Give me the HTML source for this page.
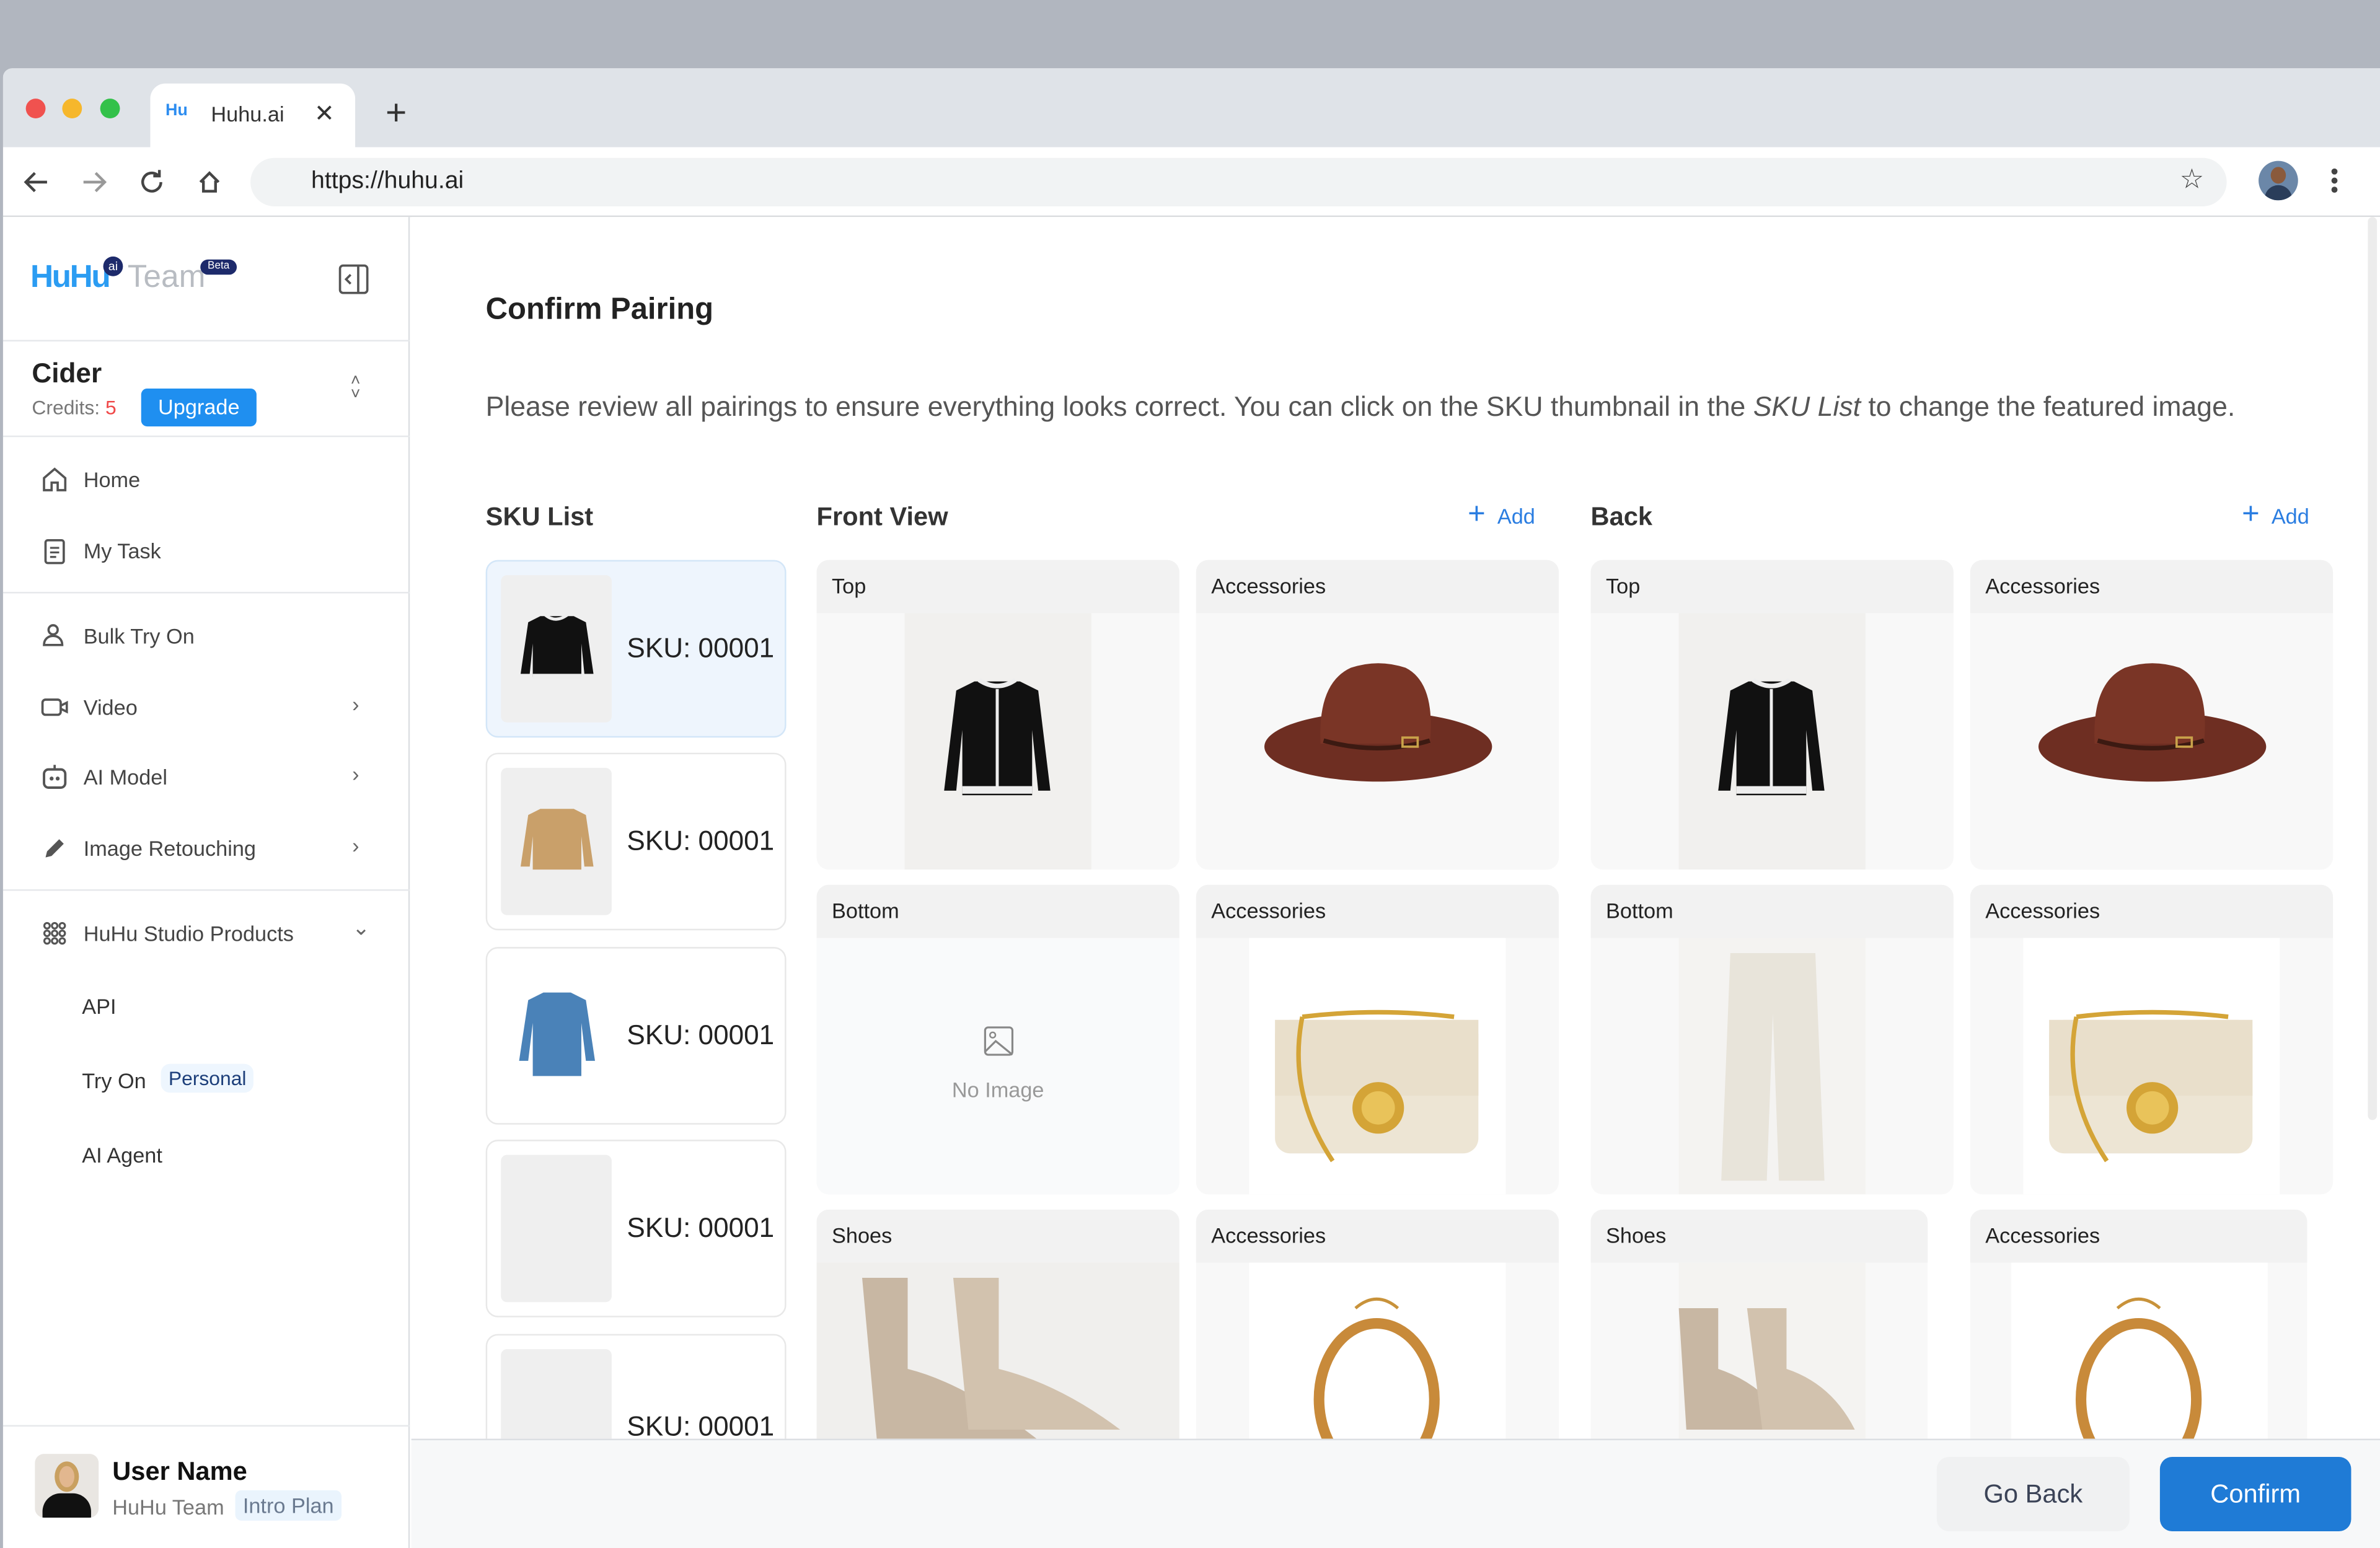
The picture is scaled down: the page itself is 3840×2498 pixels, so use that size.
<!DOCTYPE html>
<html><head><meta charset="utf-8"><style>
*{box-sizing:border-box;margin:0;padding:0}
html,body{width:3840px;height:2496px;overflow:hidden;background:#b1b6bf}
#s{position:absolute;left:0;top:0;width:1568px;height:1020px;transform:scale(2.44898);transform-origin:0 0;font-family:"Liberation Sans",sans-serif;color:#222}
.abs{position:absolute}
.win{left:2px;top:45px;width:1566px;height:975px;background:#fff;border-radius:6px 0 0 0;overflow:hidden}
.tabbar{left:0;top:0;width:1566px;height:52px;background:#dfe3e8}
.dot{width:13px;height:13px;border-radius:50%;top:20px}
.tab{left:97px;top:10px;width:135px;height:42px;background:#fff;border-radius:10px 10px 0 0}
.tool{left:0;top:52px;width:1566px;height:46px;background:#fff;border-bottom:1px solid #d9dbde}
.url{left:163px;top:7px;width:1302px;height:32px;background:#f1f3f4;border-radius:16px;font-size:16px;line-height:32px;padding-left:40px;color:#222}
.side{left:0;top:98px;width:268px;height:877px;border-right:1px solid #dcdfe3;background:#fff}
.hr{position:absolute;left:0;width:268px;height:1px;background:#e6e8eb}
.nav{position:absolute;left:24px;font-size:14px;color:#444;display:flex;align-items:center;gap:9px}
.nav svg{width:20px;height:20px}
.chev{position:absolute;left:230px;font-size:14px;color:#666}
.main{left:269px;top:98px;width:1297px;height:877px;background:#fff}
.h{font-size:17px;font-weight:bold;color:#333;position:absolute}
.add{position:absolute;color:#2a7de1;font-size:14px}
.sku{position:absolute;left:49px;width:198px;height:117px;border:1px solid #e8e8e8;border-radius:8px;background:#fff}
.sku .th{position:absolute;left:9px;top:9px;width:73px;height:97px;background:#efefef;border-radius:4px;overflow:hidden}
.sku .t{position:absolute;left:92px;top:47px;font-size:18px;color:#222}
.card{position:absolute;width:239px;height:204px;background:#f8f8f8;border-radius:8px;overflow:hidden}
.card .lb{height:35px;background:#f2f2f2;font-size:14px;color:#222;padding:9px 10px}
.card .im{position:absolute;top:35px;bottom:0;background:#fff}
.bot{left:269px;top:903px;width:1297px;height:72px;background:#f7f8f9;border-top:1px solid #dcdfe3}
</style></head><body><div id="s">
<div class="abs win">
 <div class="abs tabbar">
  <div class="abs dot" style="left:15px;background:#f0524f"></div>
  <div class="abs dot" style="left:39px;background:#f6b72c"></div>
  <div class="abs dot" style="left:64px;background:#33c14a"></div>
  <div class="abs tab"><span class="abs" style="left:10px;top:12px;font-size:11px;font-weight:bold;color:#2d8df0">Hu</span><span class="abs" style="left:40px;top:12px;font-size:14px;color:#333">Huhu.ai</span><span class="abs" style="left:108px;top:10px;font-size:16px;color:#333">✕</span></div>
  <div class="abs" style="left:252px;top:18px;font-size:24px;color:#333;line-height:24px">+</div>
 </div>
 <div class="abs tool">
  <svg class="abs" style="left:12px;top:13px" width="20" height="20" viewBox="0 0 20 20"><path d="M17 10H3M9 4l-6 6 6 6" stroke="#444" stroke-width="1.8" fill="none"/></svg>
  <svg class="abs" style="left:50px;top:13px" width="20" height="20" viewBox="0 0 20 20"><path d="M3 10h14M11 4l6 6-6 6" stroke="#999" stroke-width="1.8" fill="none"/></svg>
  <svg class="abs" style="left:88px;top:13px" width="20" height="20" viewBox="0 0 20 20"><path d="M16 10a6 6 0 1 1-2-4.5M15 2v4h-4" stroke="#444" stroke-width="1.8" fill="none"/></svg>
  <svg class="abs" style="left:126px;top:13px" width="20" height="20" viewBox="0 0 20 20"><path d="M4 10l6-6 6 6M6 9v7h8V9" stroke="#444" stroke-width="1.8" fill="none"/></svg>
  <div class="abs url">https://huhu.ai</div>
  <div class="abs" style="left:1434px;top:11px;font-size:18px;color:#444">☆</div>
  <div class="abs" style="left:1486px;top:9px;width:26px;height:26px;border-radius:50%;background:#6b87a8;overflow:hidden"><div class="abs" style="left:8px;top:4px;width:10px;height:11px;border-radius:50%;background:#8a5a3c"></div><div class="abs" style="left:4px;top:16px;width:18px;height:10px;border-radius:9px 9px 0 0;background:#2a3d5a"></div></div>
  <div class="abs" style="left:1534px;top:14px;width:4px;height:4px;border-radius:2px;background:#444;box-shadow:0 6px 0 #444,0 12px 0 #444"></div>
 </div>
 <div class="abs side">
  <div class="abs" style="left:18px;top:28px;font-size:21px;font-weight:bold;color:#2b9cf2;letter-spacing:-1px">HuHu</div>
  <div class="abs" style="left:66px;top:26px;width:13px;height:13px;border-radius:50%;background:#1d2a6b;color:#fff;font-size:8px;text-align:center;line-height:13px">ai</div>
  <div class="abs" style="left:82px;top:28px;font-size:21px;color:#b8bcc2">Team</div>
  <div class="abs" style="left:130px;top:28px;width:24px;height:10px;border-radius:5px;background:#1d2a6b;color:#fff;font-size:7px;text-align:center;line-height:10px">Beta</div>
  <svg class="abs" style="left:220px;top:30px" width="22" height="22" viewBox="0 0 22 22"><rect x="2" y="2" width="18" height="18" rx="2" stroke="#555" stroke-width="1.5" fill="none"/><path d="M14 2v18M9 8l-3 3 3 3" stroke="#555" stroke-width="1.5" fill="none"/></svg>
  <div class="hr" style="top:81px"></div>
  <div class="abs" style="left:19px;top:93px;font-size:18px;font-weight:bold;color:#222">Cider</div>
  <div class="abs" style="left:19px;top:118px;font-size:13px;color:#777">Credits: <span style="color:#f04848">5</span></div>
  <div class="abs" style="left:91px;top:113px;width:76px;height:25px;background:#1f8ff0;border-radius:4px;color:#fff;font-size:14px;text-align:center;line-height:25px">Upgrade</div>
  <div class="abs" style="left:229px;top:104px;font-size:11px;color:#666;line-height:9px">˄<br>˅</div>
  <div class="hr" style="top:144px"></div>
  <div class="nav" style="top:163px"><svg viewBox="0 0 20 20"><path d="M3 9l7-6 7 6v8h-5v-5H8v5H3z" stroke="#555" stroke-width="1.5" fill="none"/></svg>Home</div>
  <div class="nav" style="top:210px"><svg viewBox="0 0 20 20"><rect x="4" y="3" width="12" height="15" rx="1.5" stroke="#555" stroke-width="1.5" fill="none"/><path d="M7 8h6M7 11h6M7 14h4" stroke="#555" stroke-width="1.3"/></svg>My Task</div>
  <div class="hr" style="top:247px"></div>
  <div class="nav" style="top:266px"><svg viewBox="0 0 20 20"><circle cx="9" cy="6" r="3" stroke="#555" stroke-width="1.5" fill="none"/><path d="M3 16c0-4 3-6 6-6s6 2 6 6z" stroke="#555" stroke-width="1.5" fill="none"/></svg>Bulk Try On</div>
  <div class="nav" style="top:313px"><svg viewBox="0 0 20 20"><rect x="2" y="5" width="12" height="10" rx="2" stroke="#555" stroke-width="1.5" fill="none"/><path d="M14 9l4-2v6l-4-2" stroke="#555" stroke-width="1.5" fill="none"/></svg>Video</div><div class="chev" style="top:313px">›</div>
  <div class="nav" style="top:359px"><svg viewBox="0 0 20 20"><rect x="3" y="5" width="14" height="12" rx="3" stroke="#555" stroke-width="1.6" fill="none"/><circle cx="8" cy="11" r="1.3" fill="#555"/><circle cx="12" cy="11" r="1.3" fill="#555"/><path d="M10 5V2" stroke="#555" stroke-width="1.5"/></svg>AI Model</div><div class="chev" style="top:359px">›</div>
  <div class="nav" style="top:406px"><svg viewBox="0 0 20 20"><path d="M4 16l1-4 8-8 3 3-8 8z" fill="#555"/></svg>Image Retouching</div><div class="chev" style="top:406px">›</div>
  <div class="hr" style="top:443px"></div>
  <div class="nav" style="top:462px"><svg viewBox="0 0 20 20"><g fill="none" stroke="#555" stroke-width="1.3"><circle cx="5" cy="5" r="1.8"/><circle cx="10" cy="5" r="1.8"/><circle cx="15" cy="5" r="1.8"/><circle cx="5" cy="10" r="1.8"/><circle cx="10" cy="10" r="1.8"/><circle cx="15" cy="10" r="1.8"/><circle cx="5" cy="15" r="1.8"/><circle cx="10" cy="15" r="1.8"/><circle cx="15" cy="15" r="1.8"/></g></svg>HuHu Studio Products</div><div class="chev" style="top:460px">⌄</div>
  <div class="abs" style="left:52px;top:512px;font-size:14px;color:#333">API</div>
  <div class="abs" style="left:52px;top:561px;font-size:14px;color:#333">Try On</div>
  <div class="abs" style="left:104px;top:558px;padding:2px 5px;background:#eef6fe;border-radius:6px;font-size:13px;color:#1d3f7a">Personal</div>
  <div class="abs" style="left:52px;top:610px;font-size:14px;color:#333">AI Agent</div>
  <div class="hr" style="top:796px"></div>
  <div class="abs" style="left:21px;top:815px;width:42px;height:42px;border-radius:6px;background:#e9e6e2;overflow:hidden"><div class="abs" style="left:13px;top:5px;width:16px;height:20px;border-radius:50%;background:#e2b78f;border:3px solid #c9a060"></div><div class="abs" style="left:5px;top:26px;width:32px;height:20px;border-radius:12px 12px 0 0;background:#111"></div></div>
  <div class="abs" style="left:72px;top:817px;font-size:17px;font-weight:bold;color:#111">User Name</div>
  <div class="abs" style="left:72px;top:842px;font-size:14px;color:#777">HuHu Team</div>
  <div class="abs" style="left:153px;top:839px;padding:2px 5px;background:#eaf4fd;border-radius:4px;font-size:14px;color:#6a7a90">Intro Plan</div>
 </div>
 <div class="abs main">
  <div class="abs" style="left:49px;top:50px;font-size:20px;font-weight:bold;color:#222">Confirm Pairing</div>
  <div class="abs" style="left:49px;top:115px;font-size:18.2px;color:#555;white-space:nowrap">Please review all pairings to ensure everything looks correct. You can click on the SKU thumbnail in the <i>SKU List</i> to change the featured image.</div>
  <div class="h" style="left:49px;top:188px">SKU List</div>
  <div class="h" style="left:267px;top:188px">Front View</div>
  <div class="add" style="left:696px;top:189px"><span style="font-size:20px;line-height:14px">+</span> &nbsp;Add</div>
  <div class="h" style="left:777px;top:188px">Back</div>
  <div class="add" style="left:1206px;top:189px"><span style="font-size:20px;line-height:14px">+</span> &nbsp;Add</div>

  <div class="sku" style="top:226px;background:#eef5fd;border-color:#d3e6f8"><div class="th"><svg width="73" height="97" viewBox="0 0 73 97"><path d="M26 27l-8 4-5 34h6l2-20v22h32V45l2 20h6l-5-34-8-4z" fill="#111"/><path d="M29 26q7 6 15 0" stroke="#eee" stroke-width="2" fill="none"/><rect x="21" y="65" width="32" height="3" fill="#eee"/></svg></div><div class="t">SKU: 00001</div></div>
  <div class="sku" style="top:353px"><div class="th"><svg width="73" height="97" viewBox="0 0 73 97"><path d="M26 27l-8 4-5 34h6l2-20v22h32V45l2 20h6l-5-34-8-4z" fill="#c9a06a"/></svg></div><div class="t">SKU: 00001</div></div>
  <div class="sku" style="top:481px"><div class="th" style="background:#fff"><svg width="73" height="97" viewBox="0 0 73 97"><path d="M28 20l-10 5-6 40h6l3-25v35h32V40l3 25h6l-6-40-10-5z" fill="#4a82b8"/></svg></div><div class="t">SKU: 00001</div></div>
  <div class="sku" style="top:608px"><div class="th"></div><div class="t">SKU: 00001</div></div>
  <div class="sku" style="top:736px;height:100px"><div class="th"></div><div class="t" style="top:50px">SKU: 00001</div></div>

  <div class="card" style="left:267px;top:226px"><div class="lb">Top</div><div class="im" style="left:58px;width:123px;background:#f1f0ee"><svg width="123" height="169" viewBox="0 0 123 169"><path d="M46 45l-12 6-8 66h8l4-40v43h46V77l4 40h8l-8-66-12-6z" fill="#111"/><path d="M49 44q12 8 24 0" stroke="#eee" stroke-width="3" fill="none"/><path d="M61 50v68" stroke="#eee" stroke-width="2"/><rect x="38" y="114" width="46" height="5" fill="#eee"/></svg></div></div>
  <div class="card" style="left:517px;top:226px"><div class="lb">Accessories</div><div class="im" style="left:0;width:239px;background:#f8f8f8"><svg width="239" height="169" viewBox="0 0 239 169"><ellipse cx="120" cy="88" rx="75" ry="23" fill="#6e2e22"/><path d="M82 86q-2-40 20-50q18-6 36 0q20 10 16 50z" fill="#7a3526"/><path d="M84 84q36 10 70 0" stroke="#3c1a12" stroke-width="3" fill="none"/><rect x="136" y="82" width="10" height="6" fill="none" stroke="#c9a24a" stroke-width="1.5"/></svg></div></div>
  <div class="card" style="left:777px;top:226px"><div class="lb">Top</div><div class="im" style="left:58px;width:123px;background:#f1f0ee"><svg width="123" height="169" viewBox="0 0 123 169"><path d="M46 45l-12 6-8 66h8l4-40v43h46V77l4 40h8l-8-66-12-6z" fill="#111"/><path d="M49 44q12 8 24 0" stroke="#eee" stroke-width="3" fill="none"/><path d="M61 50v68" stroke="#eee" stroke-width="2"/><rect x="38" y="114" width="46" height="5" fill="#eee"/></svg></div></div>
  <div class="card" style="left:1027px;top:226px"><div class="lb">Accessories</div><div class="im" style="left:0;width:239px;background:#f8f8f8"><svg width="239" height="169" viewBox="0 0 239 169"><ellipse cx="120" cy="88" rx="75" ry="23" fill="#6e2e22"/><path d="M82 86q-2-40 20-50q18-6 36 0q20 10 16 50z" fill="#7a3526"/><path d="M84 84q36 10 70 0" stroke="#3c1a12" stroke-width="3" fill="none"/><rect x="136" y="82" width="10" height="6" fill="none" stroke="#c9a24a" stroke-width="1.5"/></svg></div></div>

  <div class="card" style="left:267px;top:440px"><div class="lb">Bottom</div><div class="im" style="left:0;width:239px;background:#f9fafb"><svg class="abs" style="left:110px;top:58px" width="20" height="20" viewBox="0 0 20 20"><rect x="1" y="1" width="18" height="18" rx="2" stroke="#888" stroke-width="1.3" fill="none"/><circle cx="6" cy="6" r="1.8" stroke="#888" fill="none"/><path d="M1 17l7-7 11 9" stroke="#888" stroke-width="1.3" fill="none"/></svg><div class="abs" style="left:0;width:239px;top:92px;text-align:center;font-size:14px;color:#999">No Image</div></div></div>
  <div class="card" style="left:517px;top:440px"><div class="lb">Accessories</div><div class="im" style="left:35px;width:169px"><svg width="169" height="169" viewBox="0 0 169 169"><path d="M35 52q50-6 100 0" stroke="#d4a437" stroke-width="3" fill="none"/><rect x="17" y="54" width="134" height="88" rx="10" fill="#ede5d4"/><path d="M17 54h134v50H17z" fill="#e9dfcb"/><circle cx="85" cy="112" r="17" fill="#d4a437"/><circle cx="85" cy="112" r="11" fill="#e9c35a"/><path d="M35 52q-10 50 20 95" stroke="#d4a437" stroke-width="3" fill="none"/></svg></div></div>
  <div class="card" style="left:777px;top:440px"><div class="lb">Bottom</div><div class="im" style="left:58px;width:123px;background:#f4f3f1"><svg width="123" height="169" viewBox="0 0 123 169"><path d="M34 10h56l6 150H66L62 50l-4 110H28z" fill="#e8e4da"/></svg></div></div>
  <div class="card" style="left:1027px;top:440px"><div class="lb">Accessories</div><div class="im" style="left:35px;width:169px"><svg width="169" height="169" viewBox="0 0 169 169"><path d="M35 52q50-6 100 0" stroke="#d4a437" stroke-width="3" fill="none"/><rect x="17" y="54" width="134" height="88" rx="10" fill="#ede5d4"/><path d="M17 54h134v50H17z" fill="#e9dfcb"/><circle cx="85" cy="112" r="17" fill="#d4a437"/><circle cx="85" cy="112" r="11" fill="#e9c35a"/><path d="M35 52q-10 50 20 95" stroke="#d4a437" stroke-width="3" fill="none"/></svg></div></div>

  <div class="card" style="left:267px;top:654px"><div class="lb">Shoes</div><div class="im" style="left:0;width:239px;background:#f0efed"><svg width="239" height="169" viewBox="0 0 239 169"><path d="M30 10h30v60q40 10 90 50H40z" fill="#c8b7a3"/><path d="M90 10h30v60q40 10 80 40H100z" fill="#d2c2ae"/></svg></div></div>
  <div class="card" style="left:517px;top:654px"><div class="lb">Accessories</div><div class="im" style="left:35px;width:169px"><svg width="169" height="169" viewBox="0 0 169 169"><ellipse cx="84" cy="90" rx="38" ry="50" stroke="#c88a3a" stroke-width="7" fill="none"/><path d="M70 30q14-12 28 0" stroke="#c8923a" stroke-width="2" fill="none"/></svg></div></div>
  <div class="card" style="left:777px;top:654px;width:222px"><div class="lb">Shoes</div><div class="im" style="left:58px;width:123px;background:#f4f3f1"><svg width="123" height="169" viewBox="0 0 123 169"><path d="M0 30h26v40q30 10 50 40H5z" fill="#c8b7a3"/><path d="M45 30h26v40q30 10 45 40H55z" fill="#d2c2ae"/></svg></div></div>
  <div class="card" style="left:1027px;top:654px;width:222px"><div class="lb">Accessories</div><div class="im" style="left:27px;width:169px"><svg width="169" height="169" viewBox="0 0 169 169"><ellipse cx="84" cy="90" rx="38" ry="50" stroke="#c88a3a" stroke-width="7" fill="none"/><path d="M70 30q14-12 28 0" stroke="#c8923a" stroke-width="2" fill="none"/></svg></div></div>
  <div class="abs" style="left:1289px;top:0;width:6px;height:595px;background:#ececec;border-radius:3px"></div>
 </div>
 <div class="abs bot">
  <div class="abs" style="left:1005px;top:11px;width:127px;height:49px;background:#f0f1f2;border-radius:8px;text-align:center;line-height:49px;font-size:17px;color:#3b4357">Go Back</div>
  <div class="abs" style="left:1152px;top:11px;width:126px;height:49px;background:#1f7bd6;border-radius:8px;text-align:center;line-height:49px;font-size:17px;color:#fff">Confirm</div>
 </div>
</div>
</div></body></html>
